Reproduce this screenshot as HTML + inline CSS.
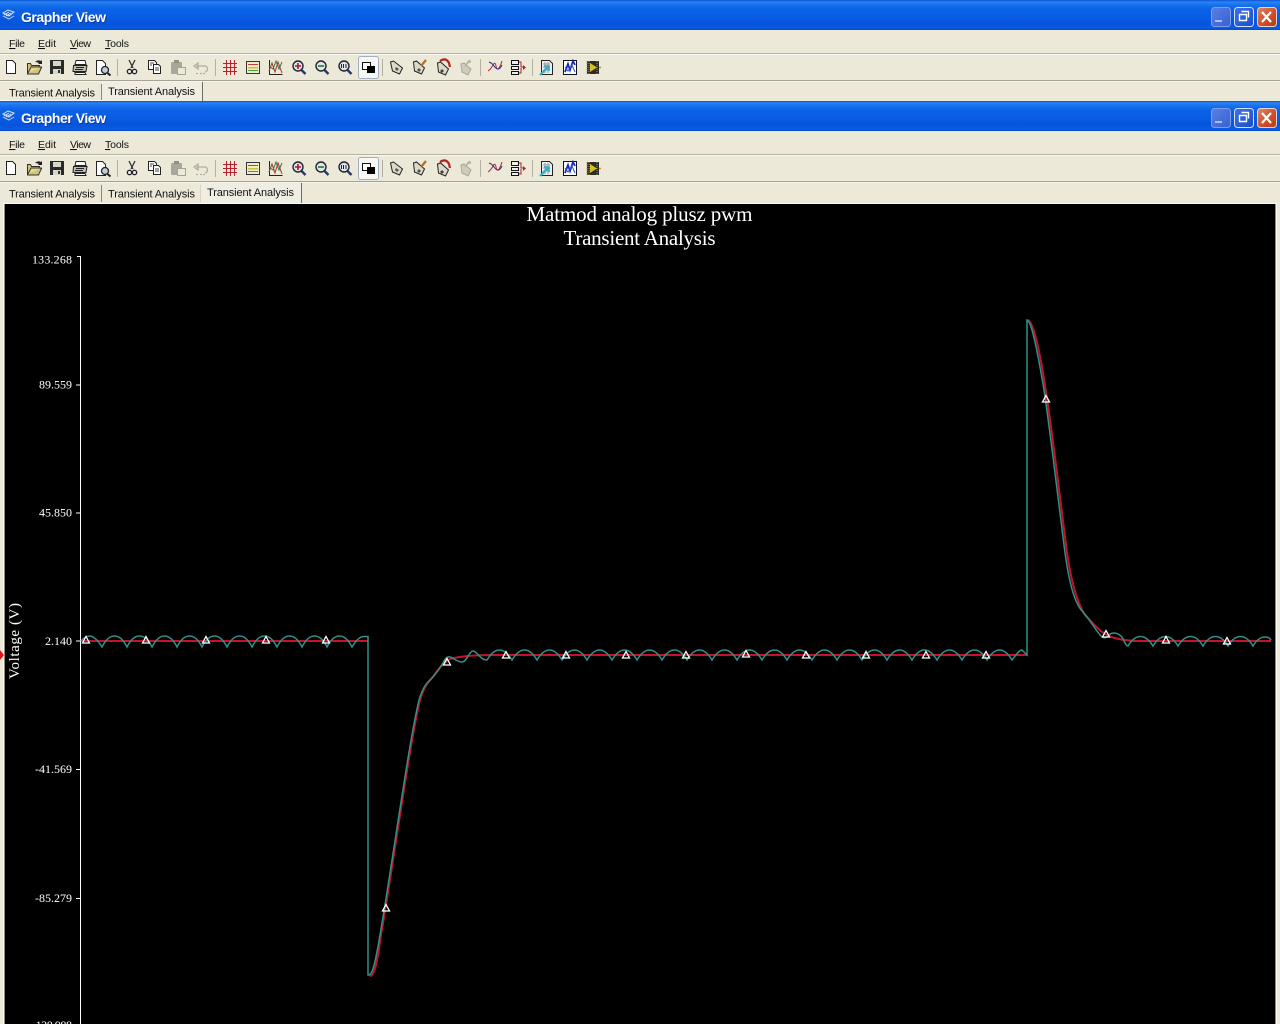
<!DOCTYPE html>
<html><head><meta charset="utf-8"><title>Grapher View</title>
<style>
html,body{margin:0;padding:0;background:#ece9d8;width:1280px;height:1024px;overflow:hidden}
svg{display:block}
.ttl{font:bold 14px "Liberation Sans",sans-serif;fill:#fff;filter:drop-shadow(1px 1px 0 #0a3aa8)}
.ui{font:11px "Liberation Sans",sans-serif;fill:#111}
.mn{font:10.5px "Liberation Sans",sans-serif;fill:#111}
.ax{font:12px "Liberation Serif",serif;fill:#fff;text-anchor:end}
.ct{font:21px "Liberation Serif",serif;fill:#fff;text-anchor:middle}
</style></head><body>
<svg width="1280" height="1024" viewBox="0 0 1280 1024" xmlns="http://www.w3.org/2000/svg">
<defs>
<linearGradient id="tb" x1="0" y1="0" x2="0" y2="1">
<stop offset="0" stop-color="#0a55d8"/><stop offset=".07" stop-color="#2d84f0"/><stop offset=".14" stop-color="#1a74ee"/><stop offset=".3" stop-color="#0a62e6"/><stop offset=".5" stop-color="#0a5ee6"/><stop offset=".8" stop-color="#0654da"/><stop offset=".93" stop-color="#0a5ce4"/><stop offset="1" stop-color="#0a49c4"/>
</linearGradient>
<linearGradient id="cl" x1="0" y1="0" x2="1" y2="1"><stop offset="0" stop-color="#e08a68"/><stop offset=".5" stop-color="#d2532e"/><stop offset="1" stop-color="#b63a14"/></linearGradient>
<linearGradient id="mx" x1="0" y1="0" x2="1" y2="1"><stop offset="0" stop-color="#3f74e6"/><stop offset="1" stop-color="#1a4cc8"/></linearGradient>
<linearGradient id="mn" x1="0" y1="0" x2="1" y2="1"><stop offset="0" stop-color="#5a80e4"/><stop offset="1" stop-color="#3561d4"/></linearGradient>

<g id="cap">
<rect x="0" y="0" width="1280" height="30" fill="url(#tb)"/>
<g fill="none" stroke-width="1">
<path d="M3 13l5-3 6 2-5 4zM4 15l5-3M6 16l5-3" stroke="#dfe6f5"/><path d="M3 16l6 3 5-3" stroke="#b7c6e6"/>
</g>
<text class="ttl" x="21" y="22" textLength="85" lengthAdjust="spacing">Grapher View</text>
<rect x="1211.5" y="7.5" width="19" height="19" rx="3" fill="url(#mn)" stroke="#7f9cea"/>
<rect x="1215" y="20" width="7" height="2" fill="#a9bdf0"/>
<rect x="1234.5" y="7.5" width="19" height="19" rx="3" fill="url(#mx)" stroke="#d4def8"/>
<path d="M1241.5 11.5h7v6M1239.5 14.5h7v6h-7z" fill="none" stroke="#fff" stroke-width="1.4"/>
<rect x="1257.5" y="7.5" width="19" height="19" rx="3" fill="url(#cl)" stroke="#e8d6d0"/>
<path d="M1262 12l9 10M1271 12l-9 10" stroke="#fff" stroke-width="2.2"/>
</g>

<g id="menu">
<rect x="0" y="53" width="1280" height="1" fill="#b5b2a3"/><rect x="0" y="54" width="1280" height="1" fill="#f8f7f1"/>
<rect x="0" y="80" width="1280" height="1" fill="#a5a294"/><rect x="0" y="81" width="1280" height="1" fill="#f5f3ea"/>
<text class="mn" x="9" y="47" textLength="16"><tspan text-decoration="underline">F</tspan>ile</text>
<text class="mn" x="38" y="47" textLength="18"><tspan text-decoration="underline">E</tspan>dit</text>
<text class="mn" x="70" y="47" textLength="21"><tspan text-decoration="underline">V</tspan>iew</text>
<text class="mn" x="105" y="47" textLength="24"><tspan text-decoration="underline">T</tspan>ools</text>
<g fill="#b3b0a2"><rect x="117" y="59" width="1" height="17"/><rect x="215" y="59" width="1" height="17"/><rect x="382" y="59" width="1" height="17"/><rect x="480" y="59" width="1" height="17"/><rect x="532" y="59" width="1" height="17"/></g>
<!-- new -->
<path d="M6.500 60.500h6l3 3v10h-9z" fill="#fff" stroke="#222"/>
<!-- open -->
<path d="M27.500 63.500h3l1 2h8l-1 2h3l-3 6.500h-11z" fill="#cfc27a" stroke="#333"/><path d="M28 73l3-6h11" fill="#e8d98c" stroke="#333"/><path d="M35 62q3-3 6-1l1-1v4h-4l1-1q-2-1-4-1" fill="#222"/>
<!-- save -->
<rect x="50" y="60" width="14" height="14" fill="#2a2a2a"/><rect x="53" y="61" width="8" height="5" fill="#d8d6c8"/><rect x="53" y="69" width="8" height="5" fill="#d8d6c8"/><rect x="58" y="70" width="2" height="3" fill="#333"/>
<!-- print -->
<path d="M76 60.500h9l1 4h-11z" fill="#fff" stroke="#222"/><path d="M73.500 65.500h13.500l-1 6h-13z" fill="#bdbbb0" stroke="#222"/><path d="M75 72.500h10l1 2h-11z" fill="#fff" stroke="#222"/><path d="M76 67.500h8M75 69.500h8" stroke="#222"/>
<!-- preview -->
<path d="M96.500 60.500h6l3 3v11h-9z" fill="#fff" stroke="#222"/><circle cx="105" cy="70" r="3.500" fill="#bcd0dc" stroke="#222" stroke-width="1.300"/><path d="M107.500 73l3 2.500" stroke="#222" stroke-width="2"/>
<!-- cut -->
<path d="M129 60l4 8M135 60l-4 8" stroke="#333" stroke-width="1.300" fill="none"/><circle cx="129.500" cy="71.500" r="2.200" fill="none" stroke="#223" stroke-width="1.300"/><circle cx="134.500" cy="71.500" r="2.200" fill="none" stroke="#223" stroke-width="1.300"/>
<!-- copy -->
<path d="M148.500 60.500h6l2 2v7h-8z" fill="#fff" stroke="#222"/><path d="M153.500 64.500h5l2 2v7h-7z" fill="#fff" stroke="#222"/><path d="M150 63h4M150 65h2M155 68h4M155 70h4" stroke="#444"/>
<!-- paste disabled -->
<rect x="171" y="62" width="11" height="12" rx="1" fill="#a9a79a"/><rect x="174" y="60" width="5" height="3" fill="#918f83"/><rect x="177.500" y="67.500" width="8" height="7" fill="#ece9d8" stroke="#a4a294"/>
<!-- undo disabled -->
<path d="M196 66h8a3 3 0 0 1 1 6M194 66l4-3v6zM196 73.500h2M200 73.500h2M203 73.500h2" fill="none" stroke="#b1af9f" stroke-width="1.300"/>
<!-- grid -->
<path d="M223 63.500h14M223 67.500h14M223 71.500h14M226.500 60v15M230.500 60v15M234.500 60v15" stroke="#b8202c" fill="none"/>
<!-- legend -->
<rect x="246.500" y="61.500" width="13" height="12" fill="#efeccc" stroke="#333"/><rect x="248" y="64" width="10" height="1" fill="#c83a30"/><rect x="248" y="67" width="10" height="1.500" fill="#c9c62c"/><rect x="248" y="70" width="10" height="1" fill="#4a9c3c"/>
<!-- traces -->
<path d="M269.500 60v14.500h13" fill="none" stroke="#222"/><path d="M269 71l3-8 3 9 3-10 4 11" fill="none" stroke="#b52a2a"/><path d="M269 66l4 3 3-8 3 8 3-7" fill="none" stroke="#2b7c4a"/>
<!-- zoom in -->
<circle cx="298" cy="66" r="5" fill="#dfe6ea" stroke="#223" stroke-width="1.400"/><path d="M295 66h6M298 63v6" stroke="#a81828" stroke-width="1.600"/><path d="M301.500 70l4 4" stroke="#26386a" stroke-width="2.400"/>
<!-- zoom out -->
<circle cx="321" cy="66" r="5" fill="#dfe6ea" stroke="#223" stroke-width="1.400"/><path d="M318 66h6" stroke="#2a8a3a" stroke-width="1.800"/><path d="M324.500 70l4 4" stroke="#26386a" stroke-width="2.400"/>
<!-- zoom 100 -->
<circle cx="344" cy="66" r="5" fill="#dfe6ea" stroke="#223" stroke-width="1.400"/><path d="M341.500 64v4M343.500 64v4M346 64v4" stroke="#222"/><path d="M347.500 70l4 4" stroke="#26386a" stroke-width="2.400"/>
<!-- pressed -->
<rect x="358.500" y="56.500" width="20" height="22" rx="2" fill="#f7f7f3" stroke="#a3b0c2"/>
<rect x="362.500" y="62.500" width="8" height="7" fill="#fff" stroke="#111"/><rect x="367" y="66" width="8" height="7" fill="#000"/>
<!-- tags -->
<path d="M390.500 62l3-1 9 7-3 6-7-3z" fill="#dcd9c8" stroke="#222"/><path d="M396 67l3 2-2 2-2-2z" fill="#555"/>
<path d="M413.500 62l3-1 8 7-3 6-7-3z" fill="#dcd9c8" stroke="#222"/><path d="M419 68l2 2-2 2-2-2z" fill="#555"/><path d="M421 66l5-6" stroke="#b06f2a" stroke-width="2.200"/>
<path d="M437.500 63l3-1 8 7-3 6-7-3z" fill="#dcd9c8" stroke="#222"/><path d="M442 69l2 2-2 2-2-2z" fill="#444"/><path d="M440 61q6-4 9 2l1 4" fill="none" stroke="#b5231d" stroke-width="2.200"/>
<path d="M461 64l3-1 7 6-3 6-6-3z" fill="#cfccbc" stroke="#a9a799"/><path d="M465 66l5-6M467 62h4" stroke="#b3b0a2" stroke-width="1.600"/>
<!-- wave -->
<path d="M488 71q3-2 5-6t3 1 3 2 3-7" fill="none" stroke="#b02a3a"/><path d="M489 62q3 1 5 4t4 3 4-4" fill="none" stroke="#2a2a8a"/>
<!-- blocks -->
<path d="M511.500 60.500h7v4h-7zM511.500 66.500h7v3h-7zM511.500 71.500h7v3h-7z" fill="#eee" stroke="#111"/><path d="M519 62h2v5h3M519 73h2v-5" fill="none" stroke="#a82828"/><path d="M523 65l3 2.500-3 2.500z" fill="#a82828"/>
<!-- graph doc -->
<path d="M541.500 60.500h8l3 3v11h-11z" fill="#eee" stroke="#222"/><path d="M543 64h7M543 67h7M543 70h7M545 62v11M548 62v11" stroke="#9a9a9a"/><path d="M540 75l8-8" stroke="#30b0c8" stroke-width="2.200"/><path d="M544 66h5v5" fill="none" stroke="#30b0c8" stroke-width="1.600"/>
<!-- graph blue -->
<rect x="563.500" y="60.500" width="13" height="14" fill="#fff" stroke="#112"/><path d="M565 72l3-8 2 6 3-9 2 4" fill="none" stroke="#1a2ab0" stroke-width="1.800"/><path d="M565 67l3 4 4-6 3 7" fill="none" stroke="#3050c8"/>
<!-- LV icon -->
<rect x="587" y="61" width="12" height="13" fill="#2c2c24"/><path d="M587 61v13M589 61v13M597 61v13" stroke="#9a9a78" stroke-dasharray="1 1"/><path d="M590 63l7 4.500-7 4.500z" fill="#d9c020"/><path d="M599 67.500h2" stroke="#c89020" stroke-width="1.500"/>
</g>
</defs>

<!-- window chrome -->
<rect width="1280" height="1024" fill="#ece9d8"/>
<use href="#cap"/><use href="#cap" y="101"/>
<use href="#menu"/><use href="#menu" y="101"/>

<!-- tab row 1 -->
<rect x="102" y="82" width="100" height="19" fill="#f0eee3"/>
<rect x="202" y="82" width="1" height="19" fill="#6f6d62"/><rect x="101" y="84" width="1" height="16" fill="#8a887a"/>
<rect x="0" y="100" width="102" height="1" fill="#faf9f3"/>
<text class="ui" x="9" y="96.500" textLength="86">Transient Analysis</text>
<text class="ui" x="108" y="95" textLength="87">Transient Analysis</text>

<!-- tab row 2 -->
<rect x="201" y="183" width="100" height="20" fill="#f0eee3"/>
<rect x="301" y="183" width="1" height="20" fill="#6f6d62"/><rect x="101" y="185" width="1" height="17" fill="#8a887a"/><rect x="200" y="185" width="1" height="17" fill="#d8d5c5"/>
<text class="ui" x="9" y="197.500" textLength="86">Transient Analysis</text>
<text class="ui" x="108" y="197.500" textLength="87">Transient Analysis</text>
<text class="ui" x="207" y="196" textLength="87">Transient Analysis</text>

<!-- plot frame -->
<rect x="3" y="203" width="1274" height="821" fill="#fbfaf5"/>
<rect x="4" y="204" width="1" height="820" fill="#8d8b7e"/>
<rect x="1275" y="204" width="1" height="820" fill="#8d8b7e"/>
<rect x="5" y="204" width="1270" height="820" fill="#000"/>
<path d="M0 650l4 5-4 5z" fill="#e0101c"/>

<text class="ct" x="639.500" y="221" textLength="226">Matmod analog plusz pwm</text>
<text class="ct" x="639.500" y="245" textLength="152">Transient Analysis</text>

<!-- axis -->
<path d="M80.500 256v768M77 256.500h4M76 385h5M76 513h5M76 641h5M76 769.500h5M76 898.500h5M76 1026h5" stroke="#fff" fill="none"/>
<text class="ax" x="72" y="263.500" textLength="40">133.268</text>
<text class="ax" x="72" y="388.500" textLength="33">89.559</text>
<text class="ax" x="72" y="516.500" textLength="33">45.850</text>
<text class="ax" x="72" y="645" textLength="27">2.140</text>
<text class="ax" x="72" y="773" textLength="37">-41.569</text>
<text class="ax" x="72" y="902" textLength="37">-85.279</text>
<text class="ax" x="72" y="1029" textLength="40">-128.988</text>
<text transform="translate(19 641) rotate(-90)" font-family="Liberation Serif, serif" font-size="15" fill="#fff" text-anchor="middle" textLength="76">Voltage (V)</text>

<!-- red trace -->
<path d="M81 641H368M370 976C374 976 377 965 381 935C387 900 393 860 400 815C407 770 414 725 420 700C423 690 426 684 431 679C437 672 441 664 450 659C460 656 478 655 495 655H1027M1028 320C1033 322 1039 345 1046 392C1052 430 1059 490 1066 545C1071 585 1078 604 1085 615C1092 622 1098 630 1105 634C1112 638 1120 640 1135 641H1271" fill="none" stroke="#c8102c" stroke-width="2"/>
<!-- teal trace -->
<path d="M81 641Q85 636 90 636Q96 637 102 647c3-6 7-11 12.500-11s9.500 5 12.500 11c3-6 7-11 12.500-11s9.500 5 12.500 11c3-6 7-11 12.500-11s9.500 5 12.500 11c3-6 7-11 12.500-11s9.500 5 12.500 11c3-6 7-11 12.500-11s9.500 5 12.500 11c3-6 7-11 12.500-11s9.500 5 12.500 11c3-6 7-11 12.500-11s9.500 5 12.500 11c3-6 7-11 12.500-11s9.500 5 12.500 11c3-6 7-11 12.500-11s9.500 5 12.500 11c3-6 7-11 12.500-11s9.500 5 12.500 11C355 642 359 636.500 364 636.500H368V975C372 976 375 965 380 935C386 900 392 860 399 815C406 770 413 725 419 700C422 690 425 685 428 682C434 677 440 668 444 661C446 657 448 656.500 450 657C454 658 457 662 462 662C467 662 469 651 473 651C477 651 480 660 487 660c3-5 7-10 12.500-10s9.500 5 12.500 10c3-5 7-10 12.500-10s9.500 5 12.500 10c3-5 7-10 12.500-10s9.500 5 12.500 10c3-5 7-10 12.500-10s9.500 5 12.500 10c3-5 7-10 12.500-10s9.500 5 12.500 10c3-5 7-10 12.500-10s9.500 5 12.500 10c3-5 7-10 12.500-10s9.500 5 12.500 10c3-5 7-10 12.500-10s9.500 5 12.500 10c3-5 7-10 12.500-10s9.500 5 12.500 10c3-5 7-10 12.500-10s9.500 5 12.500 10c3-5 7-10 12.500-10s9.500 5 12.500 10c3-5 7-10 12.500-10s9.500 5 12.500 10c3-5 7-10 12.500-10s9.500 5 12.500 10c3-5 7-10 12.500-10s9.500 5 12.500 10c3-5 7-10 12.500-10s9.500 5 12.500 10c3-5 7-10 12.500-10s9.500 5 12.500 10c3-5 7-10 12.500-10s9.500 5 12.500 10c3-5 7-10 12.500-10s9.500 5 12.500 10c3-5 7-10 12.500-10s9.500 5 12.500 10c3-5 7-10 12.500-10s9.500 5 12.500 10c3-5 7-10 12.500-10s9.500 5 12.500 10C1016 655 1019 650 1022 650L1027 655V320C1031 321 1036 342 1044 390C1050 430 1057 490 1064 545C1069 585 1075 604 1083 612C1090 620 1097 632 1101 636C1104 639 1107 638 1110 634C1114 632 1118 633 1122 637C1124 641 1126 646 1128 646c3-5 7-9.500 12.500-9.500s9.500 4.500 12.500 9.500c3-5 7-9.500 12.500-9.500s9.500 4.500 12.500 9.500c3-5 7-9.500 12.500-9.500s9.500 4.500 12.500 9.500c3-5 7-9.500 12.500-9.500s9.500 4.500 12.500 9.500c3-5 7-9.500 12.500-9.500s9.500 4.500 12.500 9.500c3-5 7-9 12-9 3 0 5 1 6 3" fill="none" stroke="#2f918a" stroke-width="1.500"/>

<!-- markers -->
<g fill="none" stroke="#fff" stroke-width="1.300">
<path d="M86 636.500l3.500 6.500h-7zM146 636.500l3.500 6.500h-7zM206 636.500l3.500 6.500h-7zM266 636.500l3.500 6.500h-7zM326 636.500l3.500 6.500h-7zM386 904.500l3.500 6.500h-7zM447 658.500l3.500 6.500h-7zM506 651.500l3.500 6.500h-7zM566 651.500l3.500 6.500h-7zM626 651.500l3.500 6.500h-7zM686 651.500l3.500 6.500h-7zM746 650.500l3.500 6.500h-7zM806 651.500l3.500 6.500h-7zM866 651.500l3.500 6.500h-7zM926 651.500l3.500 6.500h-7zM986 651.500l3.500 6.500h-7zM1046 395.500l3.500 6.500h-7zM1106 630.500l3.500 6.500h-7zM1166 636.500l3.500 6.500h-7zM1227 637.500l3.500 6.500h-7z"/>
</g>
</svg>
</body></html>
